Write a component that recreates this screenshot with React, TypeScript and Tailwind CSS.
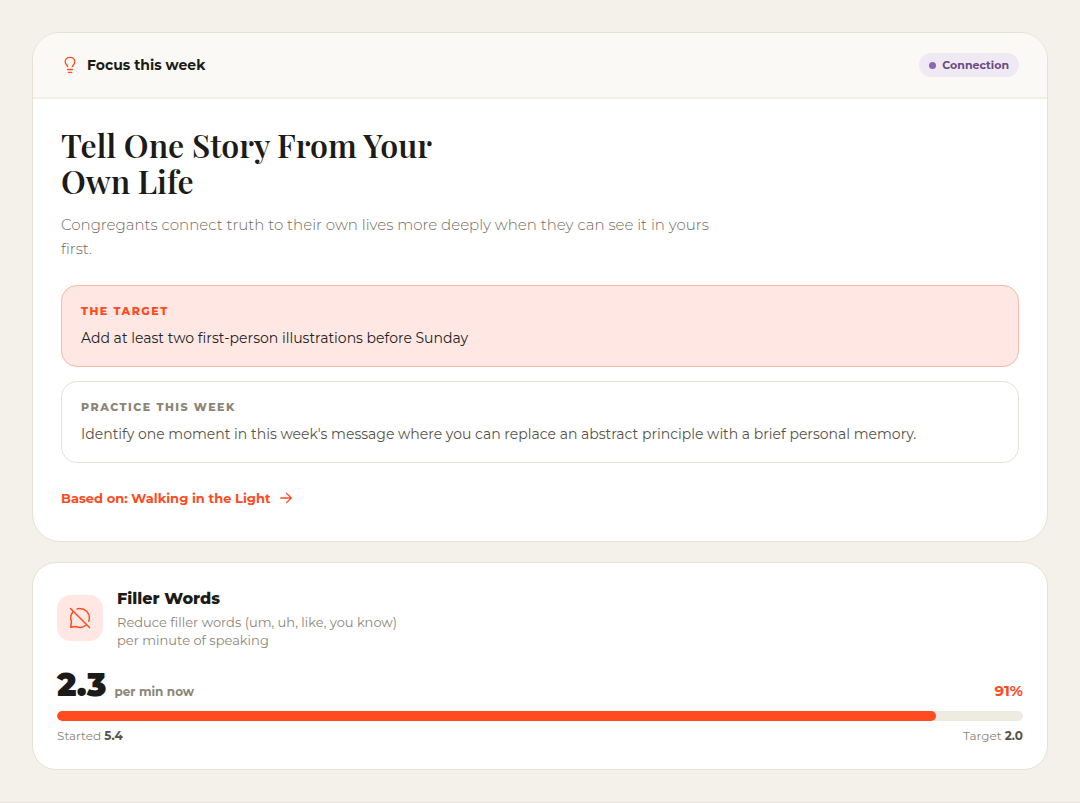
import type { ReactNode } from 'react'

interface NoteProps {
  label: string
  tone: 'target' | 'practice'
  children: ReactNode
}

const noteStyles = {
  target: {
    box: 'border-[#f8b9a6] bg-[#ffe8e3]',
    label: 'text-[#ff4b1f]',
    text: 'text-[#24231f]',
  },
  practice: {
    box: 'border-[#e5e1d6] bg-white',
    label: 'text-[#8c8677]',
    text: 'text-[#57534a]',
  },
}

function BulbIcon() {
  return (
    <svg width="18" height="18" viewBox="0 0 18 18" fill="none" stroke="currentColor" strokeWidth="1.3" strokeLinecap="round" strokeLinejoin="round" aria-hidden="true">
      <path d="M6.5 13.5h5" />
      <path d="M7.3 16.3h3.4" />
      <path d="M6.7 10.7C6.6 9.3 4.2 8.7 4.2 5.8 4.2 3.2 6.3 1.3 9 1.3s4.8 1.9 4.8 4.5c0 2.9-2.4 3.5-2.5 4.9" />
    </svg>
  )
}

function BubbleOffIcon() {
  return (
    <svg width="24" height="24" viewBox="0 0 24 24" fill="none" stroke="currentColor" strokeWidth="1.5" strokeLinecap="round" strokeLinejoin="round" aria-hidden="true">
      <path d="M2.5 2.5l19 19" />
      <path d="M9 2.9A9.4 9.4 0 0 1 12 2.5c5.200 0 9.4 4.2 9.4 9.4 0 1.200-.2 2.3-.6 3.3" />
      <path d="M4.9 5.9A9.4 9.4 0 0 0 3.4 15.4L2.7 21.3l5.3-.8c4 1.7 7.3.9 9.8-1.2" />
    </svg>
  )
}

function ArrowIcon() {
  return (
    <svg width="14" height="14" viewBox="0 0 24 24" fill="none" stroke="currentColor" strokeWidth="2.2" strokeLinecap="round" strokeLinejoin="round" aria-hidden="true">
      <path d="M3 12h18M13 4l8 8-8 8" />
    </svg>
  )
}

function Note({ label, tone, children }: NoteProps) {
  const styles = noteStyles[tone]

  return (
    <div className={`rounded-2xl border px-[19px] py-4 ${styles.box}`}>
      <h3 className={`text-[11px] leading-[18px] font-extrabold tracking-[1.5px] uppercase ${styles.label}`}>{label}</h3>
      <p className={`mt-1.5 text-sm leading-6 ${styles.text}`}>{children}</p>
    </div>
  )
}

function FocusCard() {
  return (
    <section className="overflow-hidden rounded-[28px] border border-[#e6e1d3] bg-white">
      <header className="flex items-center justify-between border-b-2 border-[#f3f0e8] bg-[#faf9f5] px-7 py-5">
        <div className="flex items-center gap-2">
          <span className="text-[#ff4b1f]"><BulbIcon /></span>
          <h2 className="text-sm leading-6 font-bold text-[#1c1b18]">Focus this week</h2>
        </div>
        <span className="flex items-center gap-1.5 rounded-full bg-[#efe9f4] px-2.5 text-[11px] leading-6 font-bold text-[#6b4a82]">
          <span className="size-[7px] rounded-full bg-[#9163b0]" />
          Connection
        </span>
      </header>

      <div className="px-7 pt-7 pb-8">
        <h1 className="max-w-[420px] font-['Playfair_Display','Liberation_Serif',serif] text-[32px] leading-9 font-semibold text-[#1c1b18]">
          Tell One Story From Your Own Life
        </h1>
        <p className="mt-3.5 max-w-[650px] text-[15px] leading-6 font-light text-[#6f6b60]">
          Congregants connect truth to their own lives more deeply when they can see it in yours first.
        </p>

        <div className="mt-6 flex flex-col gap-3.5">
          <Note label="The target" tone="target">
            Add at least two first-person illustrations before Sunday
          </Note>
          <Note label="Practice this week" tone="practice">
            Identify one moment in this week's message where you can replace an abstract principle with a brief personal memory.
          </Note>
        </div>

        <a href="#sermon" className="mt-6 flex w-fit items-center gap-2 text-[13px] leading-[22px] font-bold text-[#ff4b1f]">
          Based on: Walking in the Light
          <ArrowIcon />
        </a>
      </div>
    </section>
  )
}

function FillerWordsCard() {
  const progress = 91

  return (
    <section className="rounded-3xl border border-[#e6e1d3] bg-white p-6">
      <div className="flex items-center gap-3.5">
        <div className="flex size-[46px] shrink-0 items-center justify-center rounded-[14px] bg-[#ffe8e3] text-[#ff4b1f]">
          <BubbleOffIcon />
        </div>
        <div>
          <h2 className="text-base leading-6 font-extrabold text-[#1c1b18]">Filler Words</h2>
          <p className="mt-0.5 max-w-[290px] text-[13px] leading-[18px] text-[#8c8677]">
            Reduce filler words (um, uh, like, you know) per minute of speaking
          </p>
        </div>
      </div>

      <div className="mt-4 flex items-baseline justify-between">
        <p className="flex items-baseline gap-2">
          <span className="text-[32px] leading-10 font-black text-[#1c1b18]">2.3</span>
          <span className="text-xs font-bold text-[#8c8677]">per min now</span>
        </p>
        <p className="text-[15px] font-bold text-[#ff4b1f]">{progress}%</p>
      </div>

      <div
        className="mt-1.5 h-2.5 overflow-hidden rounded-full bg-[#eeebe0]"
        role="progressbar"
        aria-label="Filler words progress"
        aria-valuenow={progress}
        aria-valuemin={0}
        aria-valuemax={100}
      >
        <div className="h-full rounded-full bg-[#ff4b1f]" style={{ width: `${progress}%` }} />
      </div>

      <div className="mt-1.5 flex justify-between text-xs leading-[18px] text-[#8c8677]">
        <p>Started <strong className="font-bold text-[#57534a]">5.4</strong></p>
        <p>Target <strong className="font-bold text-[#57534a]">2.0</strong></p>
      </div>
    </section>
  )
}

export default function App() {
  return (
    <div className="min-h-screen bg-[#f4f1ea] font-['Montserrat','Inter','Liberation_Sans',sans-serif]">
      <main className="flex flex-col gap-5 border-b border-[#e9e5da] p-8">
        <FocusCard />
        <FillerWordsCard />
      </main>
    </div>
  )
}
